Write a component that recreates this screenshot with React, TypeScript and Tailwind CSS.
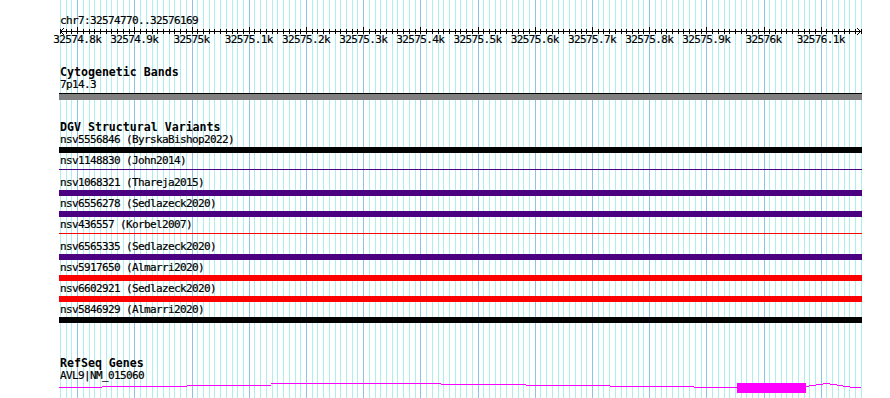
const STEP = 5.72; // px per 10bp
const LEFT = 60;

const gx = (k: number) => Math.round(LEFT + k * STEP);

const LABELS = [
  "32574.8k", "32574.9k", "32575k", "32575.1k", "32575.2k", "32575.3k", "32575.4k",
  "32575.5k", "32575.6k", "32575.7k", "32575.8k", "32575.9k", "32576k", "32576.1k",
];

const SV: { id: string; src: string; color: string; thin?: boolean }[] = [
  { id: "nsv5556846", src: "ByrskaBishop2022", color: "bg-black" },
  { id: "nsv1148830", src: "John2014", color: "bg-[#4b0082]", thin: true },
  { id: "nsv1068321", src: "Thareja2015", color: "bg-[#4b0082]" },
  { id: "nsv6556278", src: "Sedlazeck2020", color: "bg-[#4b0082]" },
  { id: "nsv436557", src: "Korbel2007", color: "bg-[#ff0000]", thin: true },
  { id: "nsv6565335", src: "Sedlazeck2020", color: "bg-[#4b0082]" },
  { id: "nsv5917650", src: "Almarri2020", color: "bg-[#ff0000]" },
  { id: "nsv6602921", src: "Sedlazeck2020", color: "bg-[#ff0000]" },
  { id: "nsv5846929", src: "Almarri2020", color: "bg-black" },
];

// intron "hat" lines, page coords [x1, x2, y]
const INTRON: [number, number, number][] = [
  [59, 102, 387], [102, 187, 386], [187, 271, 385], [271, 441, 383],
  [441, 526, 384], [526, 610, 385], [610, 694, 386], [694, 737, 387],
  [806, 809, 386], [809, 816, 385], [816, 823, 384], [823, 830, 383],
  [830, 837, 384], [837, 843, 385], [843, 850, 386], [850, 861, 387],
];

const ticks = Array.from({ length: 141 }, (_, k) => k);

// small text: 6px per glyph like the reference bitmap font
const small = "text-[11px] leading-[12px] tracking-[-0.62px] [-webkit-text-stroke:0.2px_black]";
const title = "text-[11.6px] font-bold leading-[13px]";

function Grid() {
  return (
    <svg className="absolute inset-0" width={890} height={398} shapeRendering="crispEdges">
      {ticks.map((k) => {
        const x = gx(k) + 0.5;
        return (
          <line key={k} x1={x} x2={x} y1={0} y2={398} stroke={k % 10 === 3 ? "#8cc3ea" : "#afeeee"} />
        );
      })}
    </svg>
  );
}

function Ruler() {
  return (
    <svg className="block overflow-visible" width={890} height={7} shapeRendering="crispEdges">
      <line x1={60} x2={862} y1={4.5} y2={4.5} stroke="#000" />
      {ticks.map((k) => {
        const x = gx(k) + 0.5;
        const major = k % 10 === 3;
        return <line key={k} x1={x} x2={x} y1={major ? 0 : 2} y2={7} stroke="#000" />;
      })}
      <polyline points="64,1 60.5,4.5 64,8" fill="none" stroke="#000" />
      <polyline points="857,1 860.5,4.5 857,8" fill="none" stroke="#000" />
    </svg>
  );
}

export default function App() {
  return (
    <div className="relative w-[890px] h-[398px] overflow-hidden bg-white text-black font-['DejaVu_Sans_Mono',monospace]">
      <Grid />
      <div className="relative">
        <div className={`pt-[15px] pl-[60px] ${small}`}>chr7:32574770..32576169</div>
        <Ruler />
        <div className={`relative h-[12px] ${small}`}>
          {LABELS.map((l, i) => (
            <span
              key={l}
              className="absolute top-0 -translate-x-1/2 whitespace-nowrap"
              style={{ left: LEFT + (30 + i * 100) * 0.572 }}
            >
              {l}
            </span>
          ))}
        </div>

        <div className={`mt-[20px] pl-[60px] ${title}`}>Cytogenetic Bands</div>
        <div className={`pl-[60px] ${small}`}>7p14.3</div>
        <div className="mt-[2px] ml-[59px] w-[803px] h-[7px] border-t border-black bg-[#808080]" />

        <div className={`mt-[21px] pl-[60px] ${title}`}>DGV Structural Variants</div>
        {SV.map((v) => (
          <div key={v.id} className="mb-[2px]">
            <div className={`pl-[60px] whitespace-pre ${small}`}>
              {v.id} ({v.src})
            </div>
            <div className="mt-[1px] ml-[59px] w-[803px] h-[6px]">
              {v.thin ? (
                <div className={`mt-[2px] h-px ${v.color}`} />
              ) : (
                <div className={`h-[6px] ${v.color}`} />
              )}
            </div>
          </div>
        ))}

        <div className={`mt-[34px] pl-[60px] ${title}`}>RefSeq Genes</div>
        <div className={`pl-[60px] ${small}`}>AVL9|NM_015060</div>
        <svg className="block" width={890} height={16} shapeRendering="crispEdges">
          {INTRON.map(([a, b, y]) => (
            <rect key={a} x={a} y={y - 382} width={b - a} height={1} fill="#ff00ff" />
          ))}
          <rect x={737} y={1} width={69} height={10} fill="#ff00ff" />
        </svg>
      </div>
    </div>
  );
}
